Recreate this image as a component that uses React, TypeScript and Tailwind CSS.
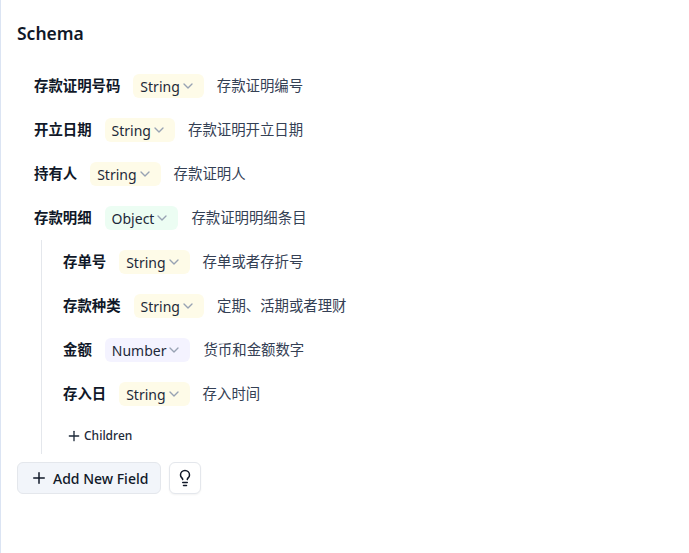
import { ChevronDown, Lightbulb, Plus } from "lucide-react";

type FieldType = "String" | "Object" | "Number";

interface Field {
  name: string;
  type: FieldType;
  description: string;
}

const topFields: Field[] = [
  { name: "存款证明号码", type: "String", description: "存款证明编号" },
  { name: "开立日期", type: "String", description: "存款证明开立日期" },
  { name: "持有人", type: "String", description: "存款证明人" },
  { name: "存款明细", type: "Object", description: "存款证明明细条目" },
];

const childFields: Field[] = [
  { name: "存单号", type: "String", description: "存单或者存折号" },
  { name: "存款种类", type: "String", description: "定期、活期或者理财" },
  { name: "金额", type: "Number", description: "货币和金额数字" },
  { name: "存入日", type: "String", description: "存入时间" },
];

function tintFor(type: FieldType): string {
  if (type === "String") return "bg-[#fefbe8]";
  if (type === "Object") return "bg-[#ecfdf3]";
  return "bg-[#f4f3ff]";
}

function FieldRow({ field }: { field: Field }) {
  return (
    <div className="flex h-11 items-center">
      <span className="pb-[1px] text-[14.4px] font-bold text-[#101828]">{field.name}</span>
      <span
        className={`ml-[13px] flex h-6 items-center rounded-md pl-[7px] pr-[8px] text-[14px] text-[#1d2939] ${tintFor(field.type)}`}
      >
        {field.type}
        <ChevronDown className="h-4 w-4 text-[#98a2b3]" strokeWidth={2} />
      </span>
      <span className="ml-[13px] pb-[1px] text-[14.4px] text-[#344054]">{field.description}</span>
    </div>
  );
}

export default function App() {
  return (
    <div
      className="h-[553px] w-[689px] border-l border-[#dbe4f3] bg-white pl-4 pt-[21px] text-[#101828]"
      style={{ fontFamily: '"Noto Sans", "Noto Sans CJK SC", sans-serif' }}
    >
      <h1 className="text-[17.5px] leading-6 font-semibold">Schema</h1>
      <div className="mt-[19px] pl-[17px]">
        {topFields.map((field) => (
          <FieldRow key={field.name} field={field} />
        ))}
        <div className="ml-[7px] border-l border-[#e4e7ec] pl-[21px]">
          {childFields.map((field) => (
            <FieldRow key={field.name} field={field} />
          ))}
          <div className="flex h-[38px] items-center pt-[2px] pl-[3px] text-[12px] font-medium text-[#1d2939]">
            <Plus className="mr-[2px] h-4 w-4" strokeWidth={2} />
            Children
          </div>
        </div>
      </div>
      <div className="mt-2 flex items-center gap-2">
        <button className="flex h-8 w-[144px] items-center rounded-md border border-[#e4e7ec] bg-[#f2f5fa] pl-3 text-[14px] font-medium text-[#101828]">
          <Plus className="mr-[5px] h-[18px] w-[18px]" strokeWidth={2} />
          Add New Field
        </button>
        <button className="flex h-8 w-8 items-center justify-center rounded-md border border-[#e4e7ec] bg-white shadow-xs">
          <Lightbulb className="h-[18px] w-[18px] text-[#101828]" strokeWidth={2} />
        </button>
      </div>
    </div>
  );
}
